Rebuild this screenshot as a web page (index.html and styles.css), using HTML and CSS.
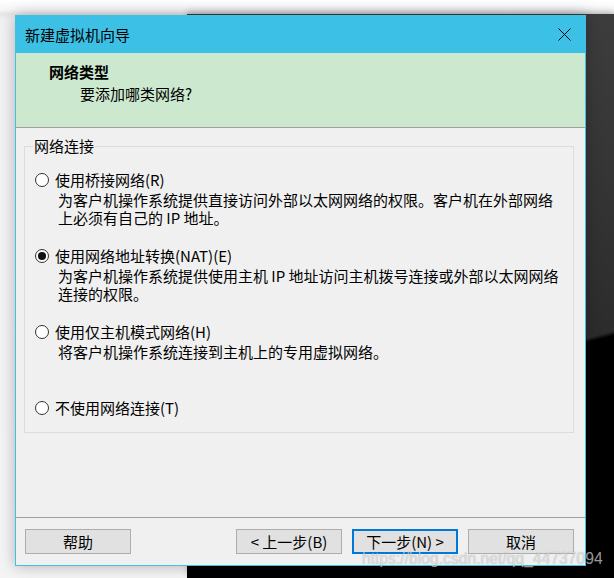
FILE: index.html
```html
<!DOCTYPE html>
<html lang="zh-CN">
<head>
<meta charset="utf-8">
<title>新建虚拟机向导</title>
<link rel="stylesheet" href="styles.css">
</head>
<body>
<div class="desktop">
  <div class="backwin"></div>
  <div class="dialog">
    <div class="titlebar">
      <span class="title">新建虚拟机向导</span>
      <svg class="close" width="13" height="13" viewBox="0 0 13 13"><path d="M0.5 0.5 L12.5 12.5 M12.5 0.5 L0.5 12.5" stroke="#000" stroke-width="1" fill="none"/></svg>
    </div>
    <div class="header">
      <div class="h-title">网络类型</div>
      <div class="h-sub">要添加哪类网络?</div>
    </div>
    <div class="body">
      <fieldset class="group">
        <legend>网络连接</legend>
        <div class="options">
          <div class="option">
            <div class="opt-row"><span class="radio"></span><span>使用桥接网络(R)</span></div>
            <div class="desc">为客户机操作系统提供直接访问外部以太网网络的权限。客户机在外部网络<br>上必须有自己的 IP 地址。</div>
          </div>
          <div class="option">
            <div class="opt-row"><span class="radio checked"></span><span>使用网络地址转换(NAT)(E)</span></div>
            <div class="desc">为客户机操作系统提供使用主机 IP 地址访问主机拨号连接或外部以太网网络<br>连接的权限。</div>
          </div>
          <div class="option">
            <div class="opt-row"><span class="radio"></span><span>使用仅主机模式网络(H)</span></div>
            <div class="desc">将客户机操作系统连接到主机上的专用虚拟网络。</div>
          </div>
          <div class="option last">
            <div class="opt-row"><span class="radio"></span><span>不使用网络连接(T)</span></div>
          </div>
        </div>
      </fieldset>
    </div>
    <div class="footer">
      <button class="btn">帮助</button>
      <div class="spacer"></div>
      <button class="btn">&lt; 上一步(B)</button>
      <button class="btn default">下一步(N) &gt;</button>
      <button class="btn">取消</button>
    </div>
  </div>
  <div class="watermark">https://blog.csdn.net/qq_44737094</div>
</div>
</body>
</html>
```

FILE: styles.css
```css
* { box-sizing: border-box; }
html, body { margin: 0; padding: 0; }
body {
  width: 614px;
  height: 578px;
  overflow: hidden;
  background: #fbfbfb;
  font-family: "Noto Sans CJK SC", "Microsoft YaHei", sans-serif;
  font-size: 15px;
  color: #000;
}
.desktop {
  position: relative;
  width: 614px;
  height: 578px;
  background: linear-gradient(to bottom, #ffffff 0, #f6f6f6 10px, #e6e6e6 14px, #f2f2f2 20px, #f4f4f4 100%);
}
.backwin {
  position: absolute;
  left: 187px;
  top: 14px;
  right: 0;
  bottom: 0;
  border-top: 1px solid #3a3a3a;
  background: linear-gradient(165deg, #424242 0%, #353535 40%, #2c2c2c 63.5%, #000 64.2%);
  box-shadow: 0 -3px 6px rgba(0,0,0,0.18);
}
.dialog {
  position: absolute;
  left: 15px;
  top: 15px;
  width: 571px;
  height: 551px;
  border: 1px solid #41bfe6;
  background: #f0f0f0;
  display: flex;
  flex-direction: column;
  box-shadow: 0 0 14px rgba(0,0,0,0.28);
}
.titlebar {
  height: 37px;
  flex: none;
  background: #3cc0e6;
  display: flex;
  align-items: center;
  justify-content: space-between;
  padding: 0 14px 0 9px;
  margin-top: -1px;
  height: 38px;
}
.title { line-height: 18px; padding-top: 1px; }
.close { display: block; margin-top: 1px; }
.header {
  height: 75px;
  flex: none;
  background: #cce8cf;
  border-bottom: 1px solid #a0a0a0;
  padding: 10px 0 0 33px;
}
.h-title { font-weight: bold; line-height: 18px; }
.h-sub { line-height: 18px; margin-top: 4px; padding-left: 31px; }
.body {
  flex: 1;
  padding: 9px 11px 0 8px;
}
.group {
  margin: 0;
  padding: 16px 0 15px 0;
  border: 1px solid #dcdcdc;
  min-width: 0;
}
.group legend {
  margin-left: 8px;
  padding: 0 1px;
  line-height: 18px;
}
.options { padding-left: 10px; }
.option { height: 76px; }
.option.last { height: 18px; }
.opt-row {
  display: flex;
  align-items: center;
  gap: 6px;
  height: 18px;
  line-height: 18px;
}
.radio {
  width: 14px;
  height: 14px;
  border: 1px solid #333;
  border-radius: 50%;
  background: #fff;
  flex: none;
  display: flex;
  align-items: center;
  justify-content: center;
}
.radio.checked::after {
  content: "";
  width: 8px;
  height: 8px;
  border-radius: 50%;
  background: #111;
}
.desc {
  margin: 2px 0 0 23px;
  line-height: 18px;
  white-space: nowrap;
}
.footer {
  flex: none;
  height: 48px;
  border-top: 1px solid #a0a0a0;
  display: flex;
  align-items: flex-start;
  gap: 10px;
  padding: 11px 11px 0 9px;
}
.spacer { flex: 1; }
.btn {
  width: 106px;
  height: 25px;
  border: 1px solid #adadad;
  background: #e1e1e1;
  font: inherit;
  font-size: 15px;
  line-height: 18px;
  padding: 0;
  color: #000;
}
.btn.default {
  border: 2px solid #0078d7;
}
.watermark {
  position: absolute;
  left: 362px;
  top: 550px;
  font-family: "Liberation Sans", Arial, sans-serif;
  font-size: 15.7px;
  line-height: 18px;
  color: rgba(255,255,255,0.6);
  text-shadow: 0 0 1px rgba(0,0,0,0.35);
  white-space: nowrap;
}
```
